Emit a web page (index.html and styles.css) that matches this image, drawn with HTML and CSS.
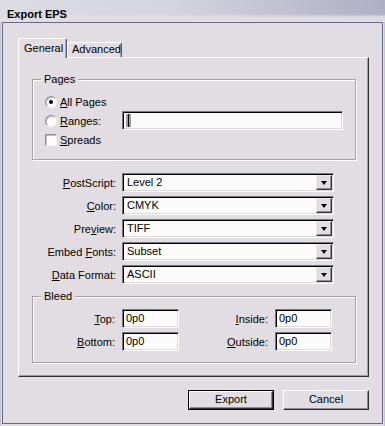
FILE: index.html
```html
<!DOCTYPE html>
<html>
<head>
<meta charset="utf-8">
<link rel="stylesheet" href="styles.css">
</head>
<body>
<div class="window">
  <div class="titlebar">Export EPS</div>
  <div class="client">
    <div class="tabs">
      <div class="tab sel">General</div>
      <div class="tab">Advanced</div>
    </div>
    <div class="panel">
      <div class="group pages">
        <span class="legend">Pages</span>
        <div class="row"><span class="radio on"></span><span class="opt"><u>A</u>ll Pages</span></div>
        <div class="row">
          <div class="rcell"><span class="radio"></span><span class="opt"><u>R</u>anges:</span></div>
          <div class="field wide"><span class="caret"></span></div>
        </div>
        <div class="row"><span class="check"></span><span class="opt"><u>S</u>preads</span></div>
      </div>

      <div class="selects">
        <div class="srow"><span class="slabel"><u>P</u>ostScript:</span><div class="select"><span class="val">Level 2</span><span class="drop"><i></i></span></div></div>
        <div class="srow"><span class="slabel"><u>C</u>olor:</span><div class="select"><span class="val">CMYK</span><span class="drop"><i></i></span></div></div>
        <div class="srow"><span class="slabel">Pre<u>v</u>iew:</span><div class="select"><span class="val">TIFF</span><span class="drop"><i></i></span></div></div>
        <div class="srow"><span class="slabel">Embed <u>F</u>onts:</span><div class="select"><span class="val">Subset</span><span class="drop"><i></i></span></div></div>
        <div class="srow"><span class="slabel"><u>D</u>ata Format:</span><div class="select"><span class="val">ASCII</span><span class="drop"><i></i></span></div></div>
      </div>

      <div class="group bleed">
        <span class="legend">Bleed</span>
        <div class="bgrid">
          <span class="blabel"><u>T</u>op:</span><div class="field small">0p0</div>
          <span class="blabel"><u>I</u>nside:</span><div class="field small">0p0</div>
          <span class="blabel"><u>B</u>ottom:</span><div class="field small">0p0</div>
          <span class="blabel"><u>O</u>utside:</span><div class="field small">0p0</div>
        </div>
      </div>
    </div>
    <div class="buttons">
      <div class="btn def"><span class="face">Export</span></div>
      <div class="btn"><span class="face">Cancel</span></div>
    </div>
  </div>
</div>
</body>
</html>
```

FILE: styles.css
```css
html, body {
  margin: 0;
  padding: 0;
  background: #e2dde2;
}
body {
  font-family: "Liberation Sans", Arial, sans-serif;
  font-size: 11px;
  color: #000;
}
u {
  text-decoration: underline;
  text-underline-offset: 1px;
}
.window {
  width: 385px;
  height: 426px;
  box-sizing: border-box;
  padding: 0 2px 2px 2px;
  display: flex;
  flex-direction: column;
  background: #e2dde2;
  box-shadow: inset 1px 0 0 #c8c4cc, inset -1px 0 0 #c8c4cc;
}
.titlebar {
  height: 22px;
  box-sizing: border-box;
  margin: 0 -2px;
  padding: 8px 0 0 7px;
  line-height: 13px;
  font-weight: bold;
  font-size: 11px;
  background:
    linear-gradient(to bottom, rgba(255,255,255,0) 0, rgba(255,255,255,0) 14px, rgba(226,221,226,0.9) 17px, #e2dde2 22px),
    linear-gradient(to right, #dcdce4 0%, #d4d4de 45%, #aeaec6 100%);
}
.client {
  flex: 1;
  border: 1px solid #6a6888;
  padding: 15px 13px 0 15px;
  display: flex;
  flex-direction: column;
}
.tabs {
  display: flex;
  align-items: flex-end;
  height: 19px;
}
.tab {
  box-sizing: border-box;
  height: 15px;
  width: 55px;
  border-left: 1px solid #ffffff;
  border-top: 1px solid #ffffff;
  border-right: 1px solid #5a5860;
  border-radius: 2px 2px 0 0;
  box-shadow: inset -1px 0 0 #a8a4ac;
  padding-left: 4px;
  line-height: 13px;
}
.tab.sel {
  width: 49px;
  height: 20px;
  margin-bottom: -1px;
  position: relative;
  z-index: 1;
  background: #e2dde2;
  padding-left: 5px;
  line-height: 18px;
}
.panel {
  border-left: 1px solid #ffffff;
  border-top: 1px solid #ffffff;
  border-right: 1px solid #303030;
  border-bottom: 1px solid #303030;
  box-shadow: inset -1px -1px 0 #a09ca4;
  padding: 21px 0 13px 13px;
}
.group {
  position: relative;
  box-sizing: border-box;
  width: 324px;
  border: 1px solid #a6a1aa;
  box-shadow: inset 1px 1px 0 #ffffff, 1px 1px 0 #ffffff;
}
.legend {
  position: absolute;
  top: -7px;
  left: 8px;
  padding: 0 3px;
  line-height: 13px;
  background: #e2dde2;
}
.pages {
  padding: 12px 0 10px 12px;
}
.row {
  display: flex;
  align-items: center;
  height: 19px;
}
.rcell {
  display: flex;
  align-items: center;
  width: 77px;
}
.opt {
  margin-left: 3px;
}
.radio {
  position: relative;
  width: 12px;
  height: 12px;
  box-sizing: border-box;
  border-radius: 50%;
  border: 1px solid;
  border-color: #8e8a94 #f4f2f4 #f4f2f4 #8e8a94;
  background: #fcfcfc;
  box-shadow: inset 1px 1px 0 #c4c0c8;
}
.radio.on::after {
  content: "";
  position: absolute;
  left: 3px;
  top: 3px;
  width: 4px;
  height: 4px;
  border-radius: 50%;
  background: #000;
}
.check {
  width: 12px;
  height: 12px;
  box-sizing: border-box;
  border: 1px solid;
  border-color: #8e8a94 #f4f2f4 #f4f2f4 #8e8a94;
  background: #fcfcfc;
  box-shadow: inset 1px 1px 0 #c4c0c8;
}
.field {
  box-sizing: border-box;
  height: 19px;
  border: 1px solid;
  border-color: #7a7680 #ffffff #ffffff #7a7680;
  box-shadow: inset 1px 1px 0 #000000, inset -1px -1px 0 #dcd8dc;
  background: #fbfbf9;
  padding-left: 3px;
  line-height: 17px;
}
.field.wide {
  width: 221px;
  display: flex;
  align-items: center;
}
.caret {
  width: 5px;
  height: 13px;
  background: linear-gradient(to right, #9e9aa4 0, #9e9aa4 2px, #000 2px, #000 3px, #9e9aa4 3px);
}
.selects {
  margin-top: 13px;
  display: flex;
  flex-direction: column;
  gap: 4px;
}
.srow {
  display: flex;
  align-items: center;
  height: 19px;
}
.slabel {
  width: 84px;
  margin-right: 6px;
  text-align: right;
}
.select {
  box-sizing: border-box;
  width: 212px;
  height: 19px;
  border: 1px solid;
  border-color: #7a7680 #ffffff #ffffff #7a7680;
  box-shadow: inset 1px 1px 0 #000000, inset -1px -1px 0 #dcd8dc;
  background: #fbfbf9;
  display: flex;
  align-items: stretch;
  padding: 1px 1px 1px 1px;
}
.val {
  flex: 1;
  padding-left: 3px;
  line-height: 15px;
}
.drop {
  width: 16px;
  box-sizing: border-box;
  background: #e2dde2;
  border: 1px solid;
  border-color: #ece8ec #3a383e #3a383e #ece8ec;
  box-shadow: inset -1px -1px 0 #8e8a94;
  display: flex;
  align-items: center;
  justify-content: center;
}
.drop i {
  display: block;
  width: 0;
  height: 0;
  border-left: 3.5px solid transparent;
  border-right: 3.5px solid transparent;
  border-top: 4px solid #000;
  margin-top: 1px;
}
.bleed {
  margin-top: 12px;
  padding: 12px 0 11px 0;
}
.bgrid {
  display: grid;
  grid-template-columns: 82px 57px 82px 57px;
  grid-auto-rows: 19px;
  column-gap: 7px;
  row-gap: 4px;
  align-items: center;
}
.blabel {
  text-align: right;
}
.field.small {
  width: 57px;
}
.buttons {
  display: flex;
  justify-content: flex-end;
  gap: 9px;
  margin-top: 13px;
}
.btn {
  box-sizing: border-box;
  width: 86px;
  height: 20px;
  border: 1px solid;
  border-color: #ffffff #303030 #303030 #ffffff;
  box-shadow: inset -1px -1px 0 #8e8a94;
  display: flex;
}
.btn .face {
  flex: 1;
  text-align: center;
  line-height: 17px;
}
.btn.def {
  border: 1px solid #000;
  box-shadow: none;
  padding: 0;
}
.btn.def .face {
  border: 1px solid;
  border-color: #ffffff #303030 #303030 #ffffff;
  box-shadow: inset -1px -1px 0 #8e8a94;
  line-height: 15px;
}
```
